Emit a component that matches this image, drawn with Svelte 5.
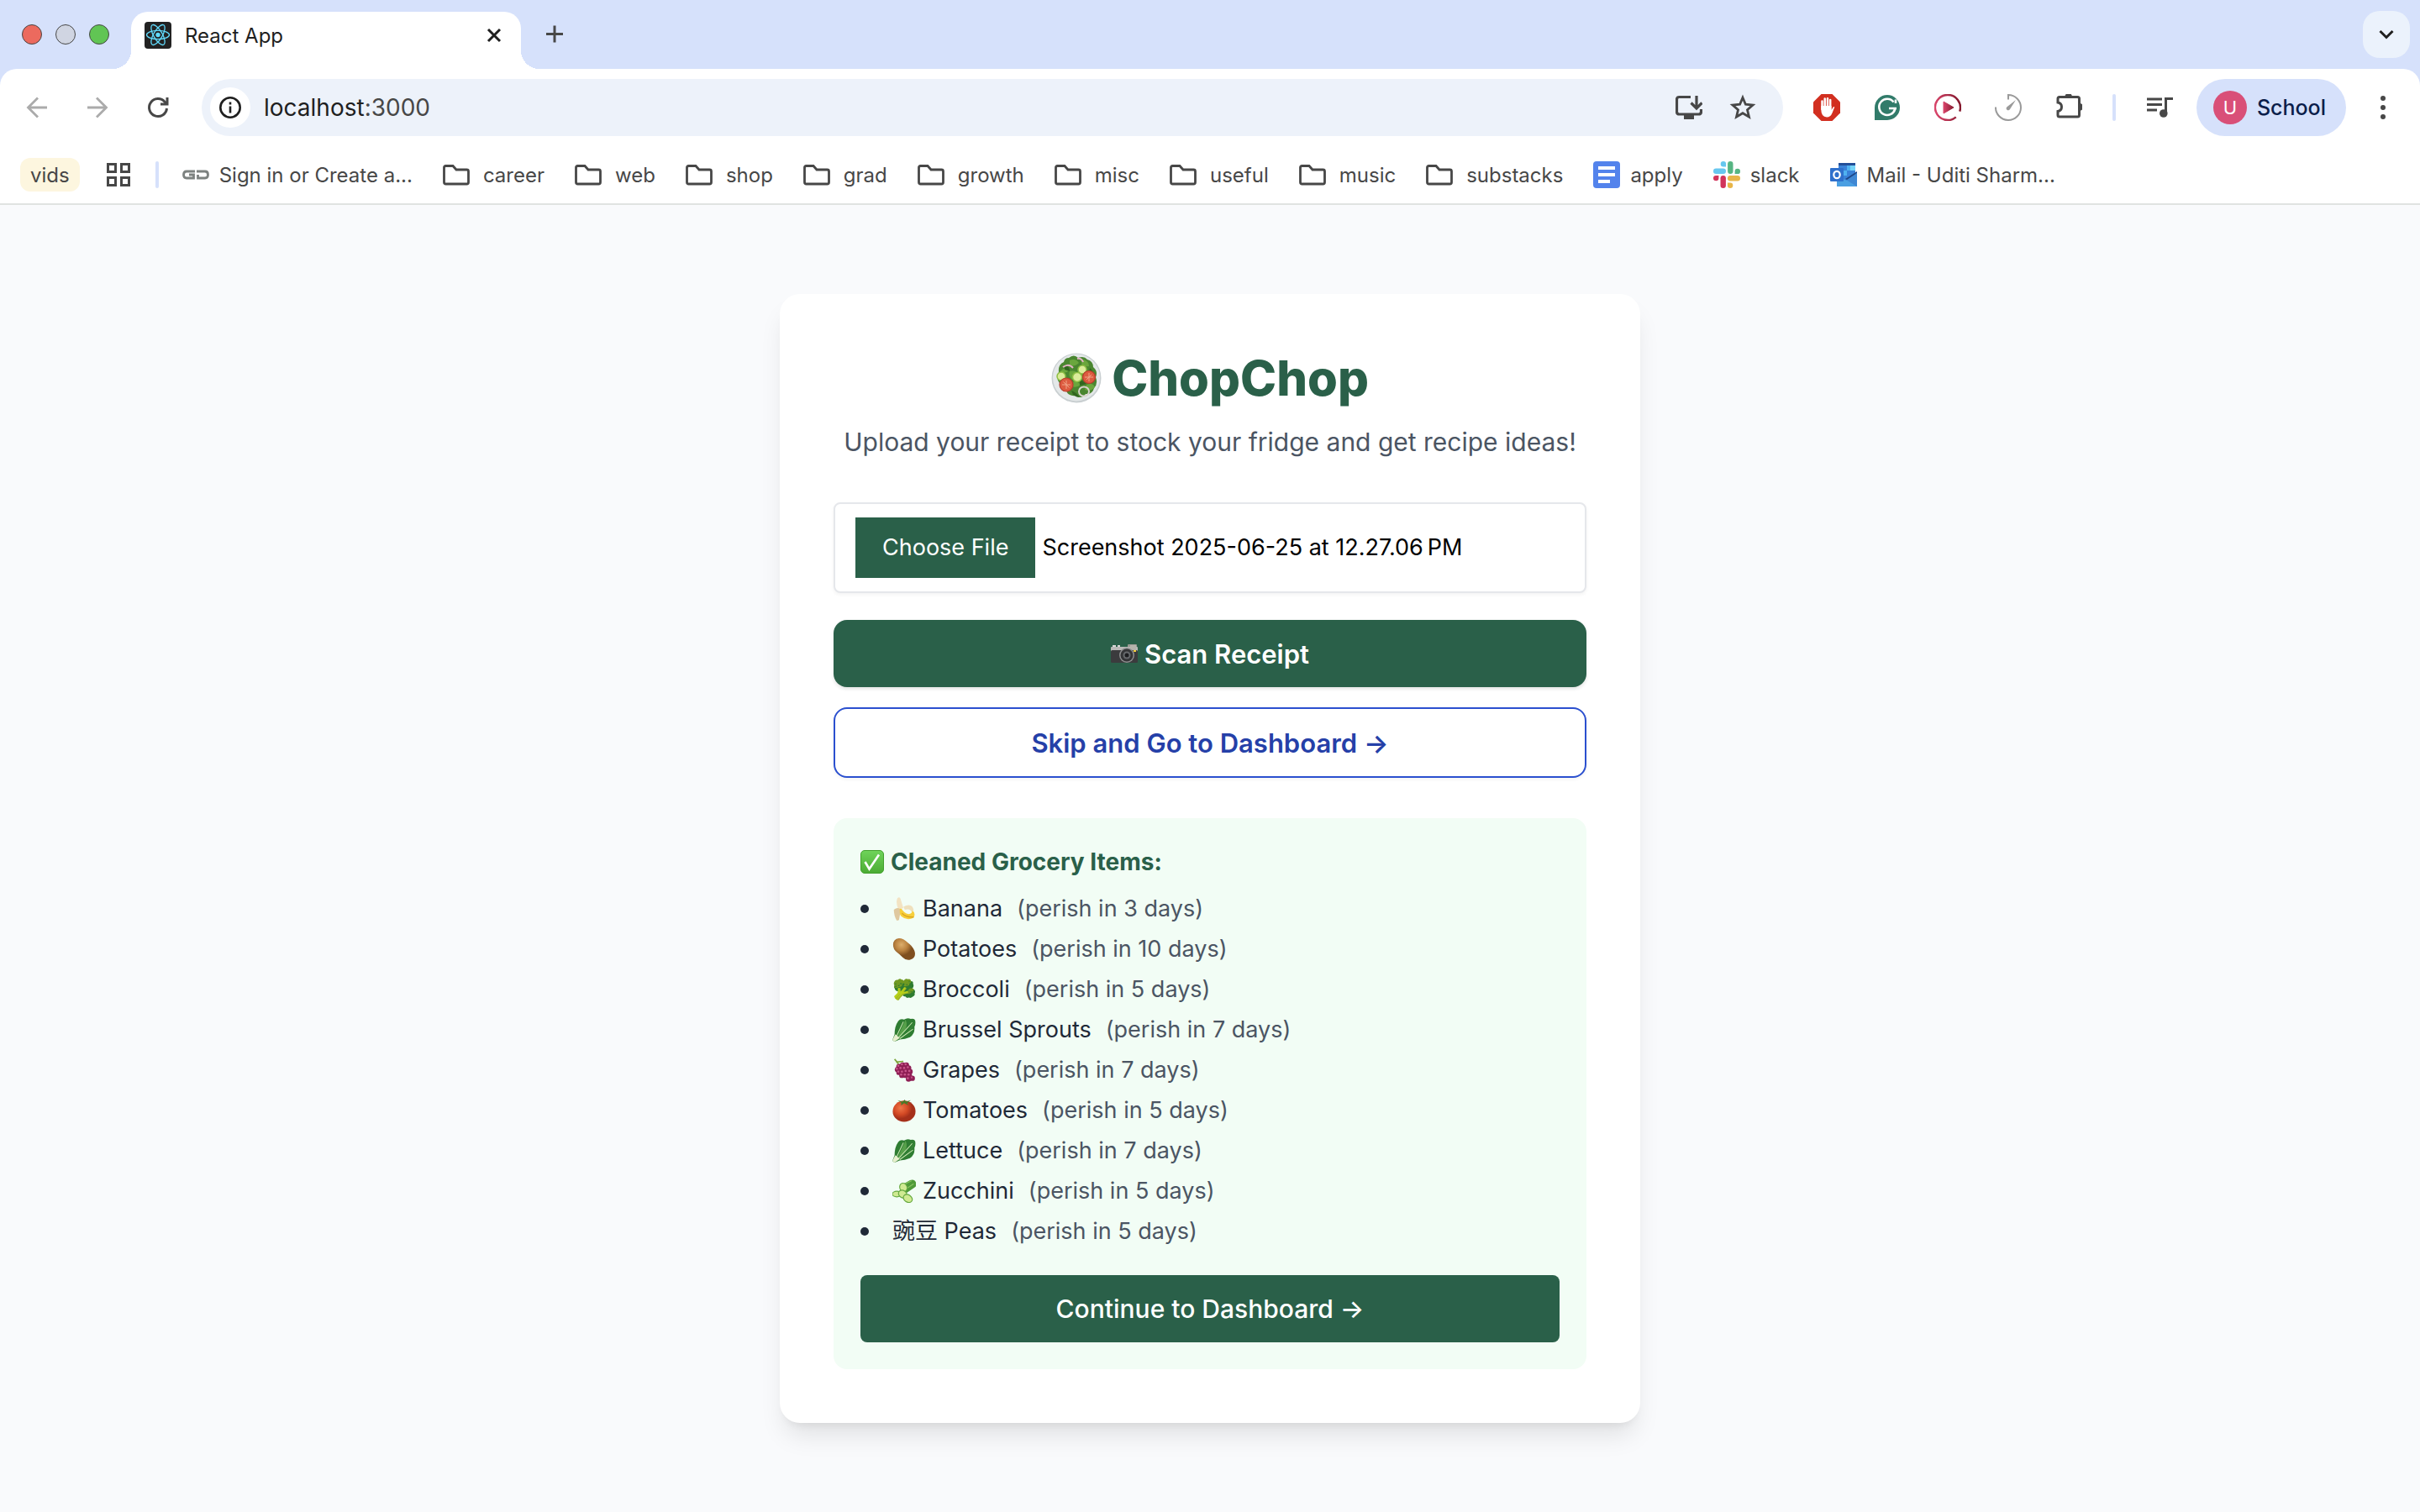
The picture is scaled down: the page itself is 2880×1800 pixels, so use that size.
<script>
  import { onMount } from 'svelte';

  const folders = ['career', 'web', 'shop', 'grad', 'growth', 'misc', 'useful', 'music', 'substacks'];

  const items = [
    { icon: 'banana', name: 'Banana', days: 3 },
    { icon: 'potato', name: 'Potatoes', days: 10 },
    { icon: '🥦', name: 'Broccoli', days: 5 },
    { icon: 'leaf', name: 'Brussel Sprouts', days: 7 },
    { icon: 'grapes', name: 'Grapes', days: 7 },
    { icon: 'tomato', name: 'Tomatoes', days: 5 },
    { icon: 'leaf', name: 'Lettuce', days: 7 },
    { icon: 'cucumber', name: 'Zucchini', days: 5 },
    { icon: '', name: '豌豆 Peas', days: 5 }
  ];

  const grapes = [
    [9, 11], [14, 9], [19, 9], [7, 15], [12, 14], [17, 14], [22, 13], [9, 19], [14, 19],
    [19, 18], [24, 18], [13, 23], [18, 23], [23, 23], [27, 27], [22, 28]
  ];

  let fileInput;

  onMount(() => {
    const transfer = new DataTransfer();
    transfer.items.add(new File([''], 'Screenshot 2025-06-25 at 12.27.06\u202fPM'));
    fileInput.files = transfer.files;
  });
</script>

<div class="window">
  <header>
    <div class="tabstrip">
      <div class="lights"><i class="red"></i><i class="grey"></i><i class="green"></i></div>
      <div class="tab">
        <svg class="icon" viewBox="0 0 32 32" aria-hidden="true">
          <rect width="32" height="32" rx="4" fill="#222" />
          <g fill="none" stroke="#61dafb" stroke-width="1.3">
            <ellipse cx="16" cy="15.5" rx="13.5" ry="5.2" />
            <ellipse cx="16" cy="15.5" rx="13.5" ry="5.2" transform="rotate(60 16 15.5)" />
            <ellipse cx="16" cy="15.5" rx="13.5" ry="5.2" transform="rotate(120 16 15.5)" />
          </g>
          <circle cx="16" cy="15.5" r="2.7" fill="#61dafb" />
        </svg>
        <span class="tabtitle">React App</span>
        <button class="close" aria-label="Close tab">
          <svg class="icon" viewBox="0 0 32 32"><path d="M9 9l14 14M23 9L9 23" stroke="#1f1f1f" stroke-width="3" /></svg>
        </button>
      </div>
      <button class="newtab" aria-label="New tab">
        <svg class="icon" viewBox="0 0 32 32"><path d="M16 5.500v20M6 15.500h20" stroke="#474747" stroke-width="3" /></svg>
      </button>
      <button class="search" aria-label="Search tabs">
        <svg class="icon" viewBox="0 0 32 32"><path d="M8.500 12l7.500 7.500L23.500 12" fill="none" stroke="#1f1f1f" stroke-width="3" /></svg>
      </button>
    </div>

    <div class="toolbar">
      <div class="nav">
        <button aria-label="Back">
          <svg class="icon" viewBox="0 0 32 32"><path d="M28 16H6M17 4.500L5.500 16 17 27.500" fill="none" stroke="#ababab" stroke-width="2.800" /></svg>
        </button>
        <button aria-label="Forward">
          <svg class="icon" viewBox="0 0 32 32"><path d="M4 16h22M15 4.500L26.500 16 15 27.500" fill="none" stroke="#ababab" stroke-width="2.800" /></svg>
        </button>
        <button aria-label="Reload">
          <svg class="icon" viewBox="0 0 32 32"><path d="M26.500 17A10.500 10.500 0 1 1 24 9.200L27 12" fill="none" stroke="#474747" stroke-width="3" /><path d="M28.500 4v9.500H19v-3h6.500V4z" fill="#474747" /></svg>
        </button>
      </div>
      <div class="omnibox">
        <button class="info" aria-label="Site information">
          <svg class="icon" viewBox="0 0 32 32"><circle cx="16" cy="16" r="11.700" fill="none" stroke="#1f1f1f" stroke-width="2.600" /><path d="M16 14.500v8M16 9.500v3" stroke="#1f1f1f" stroke-width="2.600" /></svg>
        </button>
        <span class="url">localhost<span>:3000</span></span>
        <button aria-label="Install app">
          <svg class="icon" viewBox="0 0 32 32"><path d="M18 3.500H4.500q-3 0-3 3v14.500q0 3 3 3H27.500q3 0 3-3V18" fill="none" stroke="#474747" stroke-width="3.200" /><path d="M10 24h12v6H10z" fill="#474747" /><path d="M25 2v14M18.500 10.500L25 17l6.500-6.500" fill="none" stroke="#474747" stroke-width="3.200" /></svg>
        </button>
        <button aria-label="Bookmark this page">
          <svg class="icon" viewBox="0 0 32 32"><path d="M16 4.200l3.400 8 8.600.8-6.500 5.700 2 8.500L16 22.700l-7.500 4.500 2-8.500L4 13l8.600-.8z" fill="none" stroke="#474747" stroke-width="2.800" /></svg>
        </button>
      </div>
      <div class="extensions">
        <button aria-label="AdBlock">
          <svg class="icon" viewBox="0 0 32 32"><path d="M9.500 0h13L32 9.500v13L22.500 32h-13L0 22.500v-13z" fill="#d22f20" /><g stroke="#fff" stroke-width="2.500" stroke-linecap="round"><path d="M10.500 8.500V18M13.700 5.500V18M17 5.200V18M20.200 7V18" /></g><path d="M9.300 14H21.500v5l2-3.200q1-1.300 1.800-.3L22.500 22.500Q20.500 27.500 16 27.500q-6.700-.5-6.700-9z" fill="#fff" /></svg>
        </button>
        <button aria-label="Grammarly">
          <svg class="icon" viewBox="0 0 32 32"><path d="M16 1a15 15 0 1 1 0 30H1V16A15 15 0 0 1 16 1z" fill="#317b6a" /><path d="M23.500 9.500a9.600 9.600 0 1 0 1.700 8.300M27 17h-9M26 11V6.500" fill="none" stroke="#fff" stroke-width="2.600" /></svg>
        </button>
        <button aria-label="Video speed">
          <svg class="icon" viewBox="0 0 32 32"><defs><linearGradient id="play"><stop stop-color="#d9456b" /><stop offset="1" stop-color="#85192e" /></linearGradient></defs><path d="M24.500 28.300A15 15 0 1 1 29.700 22" fill="none" stroke="url(#play)" stroke-width="2.500" transform="rotate(-6 16 16)" /><path d="M11 9l12 6.900L11 23z" fill="url(#play)" stroke="url(#play)" /></svg>
        </button>
        <button aria-label="Timer">
          <svg class="icon" viewBox="0 0 32 32"><path d="M1 15.500a15 15 0 1 0 15-14.500v5.500" fill="none" stroke="#9a9a9a" stroke-width="2" /><path d="M25 7l-7 11a2.300 2.300 0 1 1-3.500-2.800z" fill="#9a9a9a" /></svg>
        </button>
        <button aria-label="Extensions">
          <svg class="icon" viewBox="0 0 32 32"><path d="M5 3.500h21.500q2 0 2 2V25q0 2-2 2H5q-2 0-2-2v-4.500c6-1 6-9.500 0-10.500V5.500q0-2 2-2z" fill="none" stroke="#474747" stroke-width="3" /><path d="M11.500 3a4.200 4.200 0 0 1 8.400 0zM29 11a4.300 4.300 0 0 1 0 8.600z" fill="#474747" /></svg>
        </button>
      </div>
      <i class="rule"></i>
      <button class="media" aria-label="Media controls">
        <svg class="icon" viewBox="0 0 32 32"><path d="M1 6h18M1 12.500h18M1 19h12M23.500 24V5.500H32" fill="none" stroke="#474747" stroke-width="3" /><circle cx="20.800" cy="23" r="4.800" fill="#474747" /></svg>
      </button>
      <button class="profile"><span class="avatar">U</span>School</button>
      <button class="menu" aria-label="Menu">
        <svg class="icon" viewBox="0 0 32 32" fill="#474747"><circle cx="16" cy="5" r="3" /><circle cx="16" cy="16" r="3" /><circle cx="16" cy="27" r="3" /></svg>
      </button>
    </div>

    <nav class="bookmarks" aria-label="Bookmarks">
      <button class="vids">vids</button>
      <button class="apps" aria-label="All apps">
        <svg class="icon" viewBox="0 0 32 32" fill="none" stroke="#474747" stroke-width="3"><path d="M3.500 3.500h9v9h-9zM19.500 3.500h9v9h-9zM3.500 19.500h9v9h-9zM19.500 19.500h9v9h-9z" /></svg>
      </button>
      <i class="rule"></i>
      <a href="#signin" class="site">
        <svg class="icon" viewBox="0 0 32 32" aria-hidden="true" fill="none" stroke="#7d8280" stroke-width="2.800"><path d="M15 12H5q-3.500 0-3.500 4t3.500 4h8.500v-4H8M18.500 16v4H27q3.500 0 3.500-4T27 12H17" /></svg>
        Sign in or Create a...
      </a>
      {#each folders as folder}
        <button class="folder">
          <svg class="icon" viewBox="0 0 32 32" aria-hidden="true"><path d="M3.500 5.500H12l4 4.500h12.500q2 0 2 2V25q0 2-2 2h-25q-2 0-2-2V7.500q0-2 2-2z" fill="none" stroke="#474747" stroke-width="2.800" /></svg>
          {folder}
        </button>
      {/each}
      <a href="#apply" class="app">
        <svg class="icon" viewBox="0 0 32 32" aria-hidden="true"><rect width="32" height="32" rx="4" fill="#5383ec" /><path d="M6 8h20M6 16h20M6 24h14" stroke="#fff" stroke-width="4" /></svg>
        apply
      </a>
      <a href="#slack" class="app">
        <svg class="icon" viewBox="0 0 32 32" aria-hidden="true" stroke-width="6.400" stroke-linecap="round">
          <path d="M3.200 11.700h8.600" stroke="#67c7ef" /><path d="M11.900 0a3.200 3.200 0 0 1 3.200 3.200v3.200h-3.200a3.200 3.200 0 0 1 0-6.400z" fill="#67c7ef" />
          <path d="M20.300 3.200v8.600" stroke="#57b583" /><path d="M32 11.900a3.200 3.200 0 0 1-3.200 3.200h-3.200v-3.200a3.200 3.200 0 0 1 6.400 0z" fill="#57b583" />
          <path d="M28.800 20.300h-8.600" stroke="#e8b548" /><path d="M20.100 32a3.200 3.200 0 0 1-3.200-3.200v-3.200h3.200a3.200 3.200 0 0 1 0 6.400z" fill="#e8b548" />
          <path d="M11.700 28.800v-8.600" stroke="#d1345b" /><path d="M0 20.100a3.200 3.200 0 0 1 3.200-3.200h3.200v3.200a3.200 3.200 0 0 1-6.400 0z" fill="#d1345b" />
        </svg>
        slack
      </a>
      <a href="#mail" class="app">
        <svg class="icon" viewBox="0 0 32 32" aria-hidden="true"><path d="M10 2h20v22H10z" fill="#3a82d8" /><path d="M10 2h20v3H10z" fill="#234f99" /><path d="M20 5h10v6H20zM15 11h5v6h-5z" fill="#50b1f0" /><path d="M24 5h6v6h-6z" fill="#76d3f8" /><path d="M8 18l12 5 12-9v16H8z" fill="#4a9fe2" /><path d="M32 14v16L19 22z" fill="#3f87d3" /><path d="M20 22l12-8v-2l-14 9z" fill="#1d4587" /><rect y="8" width="16" height="16" rx="1" fill="#2f70cc" /><ellipse cx="8" cy="16" rx="3.700" ry="4.200" fill="none" stroke="#fff" stroke-width="2.200" /></svg>
        Mail - Uditi Sharm...
      </a>
    </nav>
  </header>

  <main>
    <section class="card">
      <h1>
        <svg class="salad" viewBox="0 0 60 60" role="img" aria-label="Salad">
          <circle cx="30" cy="30" r="29.500" fill="#c9cfd1" /><circle cx="30" cy="29.500" r="28" fill="#e4e8e9" />
          <path d="M21 6q6-5 11 0q7-3 11 2q7 2 7 9q6 5 3 12q3 8-2 13q-2 8-10 7q-5 7-12 2q-9 1-11-6q-8-2-8-9q-5-6-1-13q-1-9 6-12q1-5 6-5z" fill="#4a8630" />
          <g fill="#6aa63d"><path d="M22 9q7-3 11 3q-5 5-11 3zM37 8q8 1 8 8q-6 1-9-3zM11 22q5-6 10-1q-4 5-10 1zM20 37q9-6 15 1q-7 6-15-1zM42 38q8-3 10 3q-6 6-12 3zM22 22q8-2 11 5l-8 5q-5-4-3-10z" /></g>
          <g fill="#31651f"><path d="M16 14q6 2 6 8l-6-2zM34 15q4 4 2 11l-4-4zM46 18q5 4 4 10l-5-5zM24 45q6 2 10 8q-8 0-10-8zM34 31l8 6-8 2z" /></g>
          <path d="M14 17q7-5 12 1M31 7q5-1 7 4" fill="none" stroke="#e2b4c4" stroke-width="2" />
          <g fill="#dcec9b" stroke="#8fbf45" stroke-width="1.500"><circle cx="12" cy="28" r="5" /><circle cx="37" cy="20" r="5" /><circle cx="31" cy="29" r="5.500" /></g>
          <g fill="#dd5b40" stroke="#b83c2c" stroke-width="1.200"><circle cx="45" cy="29" r="7.500" /><circle cx="18" cy="38" r="8" /></g>
          <path d="M45 24v10M40 29h10M18 33v10M13 38h10M14.500 34.500l7 7M48 26l-6 6" stroke="#f0a688" stroke-width="1" />
          <ellipse cx="39" cy="46" rx="6" ry="5.500" fill="none" stroke="#d9d3cd" stroke-width="2" />
        </svg>
        ChopChop
      </h1>
      <p class="lead">Upload your receipt to stock your fridge and get recipe ideas!</p>

      <input class="file" type="file" aria-label="Receipt image" bind:this={fileInput} />

      <button class="scan">
        <svg class="icon" viewBox="0 0 32 32" role="img" aria-label="Camera">
          <path d="M2 6h4v3H2zM8 6h3v3H8z" fill="#d8d8d8" /><rect x="20" y="5" width="11" height="8" rx="1" fill="#9b9b95" />
          <rect y="8" width="32" height="6" rx="1" fill="#b9b9b7" /><rect y="12" width="32" height="15" rx="1.500" fill="#3b3b3d" />
          <rect x="23" y="6" width="7" height="6" fill="#b6b3ac" /><circle cx="19" cy="18" r="9" fill="#8c8d8e" /><circle cx="19" cy="18" r="7.500" fill="#343537" /><circle cx="19" cy="18" r="4.500" fill="#66696c" /><circle cx="19" cy="18" r="2.500" fill="#1d1e20" /><rect x="27" y="12" width="3" height="2" fill="#f3cf3a" />
        </svg>
        Scan Receipt
      </button>
      <button class="skip">Skip and Go to Dashboard →</button>

      <div class="results">
        <h2>
          <svg class="emoji" viewBox="0 0 28 28" role="img" aria-label="Done">
            <defs><linearGradient id="tick" x2="0" y2="1"><stop stop-color="#6fd45a" /><stop offset="1" stop-color="#4bab33" /></linearGradient></defs>
            <rect x=".5" y=".5" width="27" height="27" rx="4.500" fill="url(#tick)" stroke="#43a02e" />
            <path d="M5.500 14l5 8.500L22 5.500" fill="none" stroke="#fff" stroke-width="2.600" />
          </svg>
          Cleaned Grocery Items:
        </h2>
        <ul>
          {#each items as item}
            <li>
              {#if item.icon === 'banana'}
                <svg class="emoji" viewBox="0 0 32 32" aria-hidden="true"><path d="M15 13q12-6 14 5l-3 2q-2-5-9-3z" fill="#efe0bd" /><path d="M12 15q4 7 10 8q5 0 5-5q4 3 3 7l-1 3q-9 5-17-2q-5-5-3-11z" fill="#f7cf3b" /><path d="M13 22q6 6 16 5" fill="none" stroke="#dba51f" stroke-width="1.500" /><path d="M7 1q3-2 4 1l4 13-7 1q-4-9-1-15z" fill="#f3e3c3" /><path d="M2 17q5-4 8-1q1 8-1 15l-3 1q-4-7-4-15z" fill="#dfc89f" /></svg>
              {:else if item.icon === 'potato'}
                <svg class="emoji" viewBox="0 0 32 32" aria-hidden="true"><defs><radialGradient id="spud" cx=".38" cy=".3"><stop stop-color="#dcae6c" /><stop offset=".55" stop-color="#bb8340" /><stop offset="1" stop-color="#7f4f1f" /></radialGradient></defs><path d="M1 10Q1 2 9 1q6 0 12 6q6 4 9 11q3 9-5 12q-6 2-11-3q-4-4-8-7Q1 16 1 10z" fill="url(#spud)" /></svg>
              {:else if item.icon === 'leaf'}
                <svg class="emoji" viewBox="0 0 32 32" aria-hidden="true"><path d="M8 4q3-4 8-2q4-3 9-1q5-1 6 2q1 5-1 9q1 9-6 14q-7 3-14 3L3 32l-3-2 3-8q0-11 5-18z" fill="#2f7d32" /><path d="M18 2q4 9-3 18L6 28q5-11 12-26zM30 5q-4 10-12 17l-9 7q14-9 21-24z" fill="#57a04a" /><path d="M15 5L5 26M27 6L8 27M28 15L10 28" stroke="#c9e6b0" stroke-width="1.200" /><path d="M4 22l6 5-7 5-3-2z" fill="#e7efcd" /></svg>
              {:else if item.icon === 'grapes'}
                <svg class="emoji" viewBox="0 0 32 32" aria-hidden="true"><path d="M3 1q3 3 6 8M5 5l10-1" fill="none" stroke="#7ea63c" stroke-width="2" />{#each grapes as [x, y]}<circle cx={x} cy={y} r="3.700" fill="#8f1f55" /><circle cx={x - 1} cy={y - 1} r="1.500" fill="#c8558a" />{/each}</svg>
              {:else if item.icon === 'tomato'}
                <svg class="emoji" viewBox="0 0 32 32" aria-hidden="true"><defs><radialGradient id="tom" cx=".35" cy=".35"><stop stop-color="#ee7748" /><stop offset=".6" stop-color="#d44a25" /><stop offset="1" stop-color="#a5301a" /></radialGradient></defs><ellipse cx="16" cy="17" rx="15.500" ry="14.500" fill="url(#tom)" /><path d="M7 2l7 2 3-3 1 3 7-2-5 4 2 3-6-3-4 3v-4z" fill="#4a7a29" /></svg>
              {:else if item.icon === 'cucumber'}
                <svg class="emoji" viewBox="0 0 32 32" aria-hidden="true"><path d="M12 8L24 1q6-2 8 3t-2 7l-13 9z" fill="#4f9a38" /><path d="M15 7l11-5M20 12l9-6" stroke="#86c25f" stroke-width="1.500" /><g fill="#d0ea92" stroke="#64a83f" stroke-width="1.300"><ellipse cx="6" cy="20" rx="6" ry="3.800" /><ellipse cx="15" cy="11" rx="5" ry="6" transform="rotate(-20 15 11)" /><ellipse cx="14" cy="20" rx="6" ry="5" transform="rotate(35 14 20)" /><ellipse cx="21" cy="26" rx="6.500" ry="5" transform="rotate(35 21 26)" /></g></svg>
              {:else if item.icon}
                <span class="emoji">{item.icon}</span>
              {/if}
              <span class="name">{item.name}</span>
              <span class="days">(perish in {item.days} days)</span>
            </li>
          {/each}
        </ul>
        <button class="continue">Continue to Dashboard →</button>
      </div>
    </section>
  </main>
</div>

<style>
  :global(body) { margin: 0; }
  .window {
    min-height: 100vh;
    display: flex;
    flex-direction: column;
    background: #f9fafc;
    font-family: Inter, "Noto Sans CJK SC", sans-serif;
    color: #1f2937;
  }
  .window * { box-sizing: border-box; }
  button, input { font: inherit; color: inherit; margin: 0; }
  button { padding: 0; border: 0; background: none; display: flex; align-items: center; justify-content: center; cursor: pointer; }
  a { color: inherit; text-decoration: none; }
  .icon { width: 32px; height: 32px; display: block; flex: none; }
  .rule { width: 4px; height: 32px; border-radius: 2px; background: #d6e1fb; flex: none; }

  header { background: #d6e1fb; color: #474747; border-bottom: 2px solid #e0e3e1; white-space: nowrap; }
  .tabstrip { height: 82px; display: flex; align-items: center; padding: 0 12px 0 26px; }
  .lights { display: flex; gap: 16px; margin-right: 26px; }
  .lights i { width: 24px; height: 24px; border-radius: 50%; border: 1px solid; }
  .red { background: #ec6a5e; border-color: #d5584c; }
  .grey { background: #d0d5e2; border-color: #bcc1cf; }
  .green { background: #61c554; border-color: #52a843; }
  .tab {
    position: relative;
    align-self: flex-end;
    height: 68px;
    width: 464px;
    display: flex;
    align-items: center;
    gap: 16px;
    padding: 0 16px 12px;
    border-radius: 20px 20px 0 0;
    background: #fff;
    color: #1f1f1f;
    font-size: 24px;
  }
  .tab::before, .tab::after { content: ""; position: absolute; bottom: 0; width: 22px; height: 22px; }
  .tab::before { right: 100%; background: radial-gradient(circle at 0 0, transparent 22px, #fff 22px); }
  .tab::after { left: 100%; background: radial-gradient(circle at 100% 0, transparent 22px, #fff 22px); }
  .tabtitle { flex: 1; }
  .newtab { margin-left: 24px; }
  .search { width: 56px; height: 56px; margin-left: auto; border-radius: 20px; background: #ebf2fc; }

  .toolbar { height: 92px; display: flex; align-items: center; padding: 0 28px; background: #fff; border-radius: 20px 20px 0 0; }
  .nav, .extensions { display: flex; gap: 40px; }
  .omnibox { flex: 1; height: 68px; margin: 0 36px; padding: 0 32px 0 10px; display: flex; align-items: center; gap: 32px; border-radius: 34px; background: #edf2fa; }
  .info { width: 48px; height: 48px; border-radius: 50%; background: #fff; }
  .url { flex: 1; margin-left: -16px; font-size: 28px; color: #1f1f1f; }
  .url span { color: #474747; }
  .toolbar .rule, .media { margin-left: 36px; }
  .profile { height: 68px; margin: 0 28px; padding: 0 24px 0 20px; gap: 12px; border-radius: 34px; background: #d6e1fb; color: #0b1d4a; font-size: 25px; font-weight: 500; }
  .avatar { width: 40px; height: 40px; border-radius: 50%; background: #d94f78; color: #fff; font-size: 22px; font-weight: 400; line-height: 40px; }

  .bookmarks { height: 68px; display: flex; align-items: center; padding: 0 24px; background: #fff; font-size: 24px; }
  .bookmarks a, .folder { display: flex; align-items: center; gap: 16px; margin-right: 36px; }
  .vids { height: 40px; padding: 0 12px; border-radius: 12px; background: #fdf6df; }
  .apps { margin: 0 28px 0 30px; }
  .bookmarks a.site { margin: 0 36px 0 28px; gap: 12px; }
  .bookmarks a.app { gap: 12px; }

  main { flex: 1; display: flex; align-items: center; justify-content: center; padding: 64px; }
  .card {
    width: 100%;
    max-width: 1024px;
    padding: 64px;
    border-radius: 24px;
    background: #fff;
    box-shadow: 0 20px 30px -6px rgb(0 0 0 / 10%), 0 8px 12px -8px rgb(0 0 0 / 10%);
  }
  h1 { display: flex; align-items: center; justify-content: center; gap: 12px; margin: 0 0 16px; font-size: 58px; line-height: 72px; font-weight: 800; color: #2a6049; }
  .salad { width: 60px; height: 60px; }
  .lead { margin: 0 0 48px; text-align: center; font-size: 30px; line-height: 48px; color: #4b5563; }
  .file { display: block; width: 100%; padding: 16px 24px; border: 2px solid #e5e7eb; border-radius: 8px; background: #fff; box-shadow: 0 2px 4px rgb(0 0 0 / 5%); color: #000; font-size: 27px; line-height: 40px; }
  .file::file-selector-button { margin: 0 8px 0 0; padding: 16px 32px; border: 0; background: #2a6049; color: #fff; font: inherit; }
  .scan, .skip, .continue { width: 100%; height: 80px; gap: 8px; }
  .scan, .skip { border-radius: 16px; font-size: 31px; font-weight: 600; }
  .scan { margin-top: 32px; background: #2a6049; color: #fff; box-shadow: 0 2px 4px rgb(0 0 0 / 12%); }
  .skip { height: 84px; margin-top: 24px; border: 2px solid #2b50cf; background: #fff; color: #2540a8; box-shadow: 0 2px 4px rgb(0 0 0 / 5%); }
  .results { margin-top: 48px; padding: 32px; border-radius: 16px; background: #f2fdf5; font-size: 27px; line-height: 40px; }
  h2 { display: flex; align-items: center; gap: 8px; margin: 0 0 16px; font-size: 28px; font-weight: 700; color: #2a6049; }
  .emoji { width: 28px; height: 28px; flex: none; font-size: 23px; line-height: 28px; }
  ul { display: grid; gap: 8px; margin: 0 0 32px; padding: 0; list-style: none; }
  li { display: flex; align-items: center; height: 40px; gap: 8px; }
  li::before { content: ""; width: 10px; height: 10px; margin-right: 20px; border-radius: 50%; background: #1f2937; }
  .days { margin-left: 9px; color: #4b5563; }
  .continue { border-radius: 8px; background: #2a6049; color: #fff; font-size: 30px; font-weight: 500; }
</style>
